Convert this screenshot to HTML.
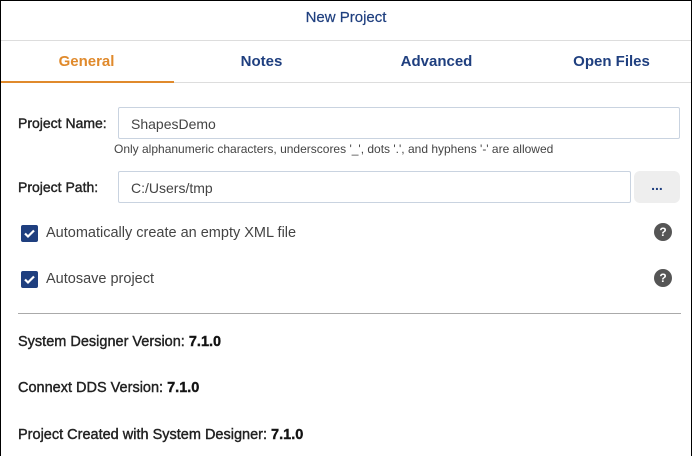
<!DOCTYPE html>
<html><head><style>
*{margin:0;padding:0;box-sizing:border-box}
body{width:692px;height:456px;overflow:hidden;background:#fff;font-family:"Liberation Sans",Arial,sans-serif;position:relative}
.frame{position:absolute;left:0;top:0;width:692px;height:456px;border:1px solid #000;border-bottom:none}
.a{position:absolute;white-space:nowrap}
.title{left:0;width:692px;top:9px;text-align:center;font-size:15px;color:#1f3f7f;-webkit-text-stroke:0.2px #1f3f7f}
.tab{top:53px;font-size:15px;font-weight:bold;color:#1f3f7f;text-align:center}
.lbl{font-size:14px;color:#222;-webkit-text-stroke:0.4px #222}
.inp{border:1px solid #c9d3e0;border-radius:2px;height:32px;font-size:14px;color:#444;padding:8px 12px}
.cb{width:17px;height:17px;background:#1f3f7f;border-radius:2px}
.q{width:18px;height:18px;border-radius:50%;background:#555;color:#fff;font-size:12px;font-weight:bold;text-align:center;line-height:18px}
.info{left:18px;font-size:14.5px;color:#222;-webkit-text-stroke:0.4px #222}
.info b{color:#111}
</style></head><body>
<div class="frame"></div>
<div class="a title">New Project</div>
<div class="a" style="left:1px;top:40px;width:690px;height:1px;background:#ddd"></div>
<div class="a tab" style="left:0;width:173px;color:#e08a2c">General</div>
<div class="a tab" style="left:175px;width:173px">Notes</div>
<div class="a tab" style="left:350px;width:173px">Advanced</div>
<div class="a tab" style="left:525px;width:173px">Open Files</div>
<div class="a" style="left:1px;top:82px;width:690px;height:1px;background:#ddd"></div>
<div class="a" style="left:1px;top:81px;width:173px;height:2px;background:#e08a2c"></div>
<div class="a lbl" style="left:18px;top:115px">Project Name:</div>
<div class="a inp" style="left:118px;top:107px;width:562px">ShapesDemo</div>
<div class="a" style="left:114px;top:142px;font-size:12px;color:#444">Only alphanumeric characters, underscores '_', dots '.', and hyphens '-' are allowed</div>
<div class="a lbl" style="left:18px;top:179px">Project Path:</div>
<div class="a inp" style="left:118px;top:171px;width:513px">C:/Users/tmp</div>
<div class="a" style="left:634px;top:171px;width:46px;height:32px;background:#eee;border-radius:6px;text-align:center;font-size:14px;font-weight:bold;color:#1f3f7f;line-height:28px">...</div>
<div class="a cb" style="left:21px;top:225px"><svg width="17" height="17"><path d="M4 8.5l3 3 6-6" stroke="#fff" stroke-width="2.2" fill="none"/></svg></div>
<div class="a" style="left:46px;top:225px;font-size:14.5px;color:#444">Automatically create an empty XML file</div>
<div class="a q" style="left:654px;top:223px">?</div>
<div class="a cb" style="left:21px;top:271px"><svg width="17" height="17"><path d="M4 8.5l3 3 6-6" stroke="#fff" stroke-width="2.2" fill="none"/></svg></div>
<div class="a" style="left:46px;top:271px;font-size:14.5px;color:#444">Autosave project</div>
<div class="a q" style="left:654px;top:269px">?</div>
<div class="a" style="left:18px;top:313px;width:663px;height:1px;background:#aaa"></div>
<div class="a info" style="top:334px">System Designer Version: <b>7.1.0</b></div>
<div class="a info" style="top:380px">Connext DDS Version: <b>7.1.0</b></div>
<div class="a info" style="top:427px">Project Created with System Designer: <b>7.1.0</b></div>
</body></html>
